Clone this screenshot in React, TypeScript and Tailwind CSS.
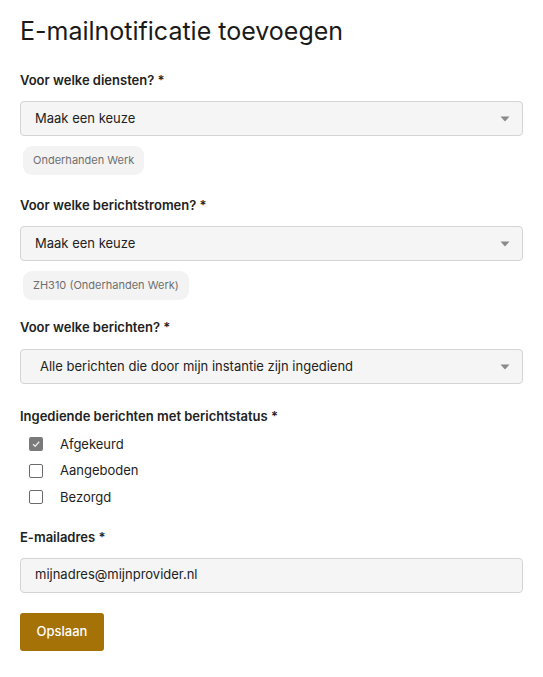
import React from "react";

function Caret() {
  return (
    <svg width="10" height="6" viewBox="0 0 10 6" className="shrink-0">
      <path d="M0.5 0.5 L9.5 0.5 L5 5.5 Z" fill="#8a8a8a" />
    </svg>
  );
}

function Select({ text, indent }: { text: string; indent?: boolean }) {
  return (
    <div className="flex h-[35px] w-full items-center justify-between rounded-[4px] border border-[#d4d4d4] bg-[#f5f5f5] pr-[12px]">
      <span className={`${indent ? "pl-[19px]" : "pl-[14px]"} text-[13px] text-[#222]`}>{text}</span>
      <Caret />
    </div>
  );
}

function Chip({ text }: { text: string }) {
  return (
    <div className="mt-[10px] ml-[3px] inline-flex h-[29px] items-center rounded-[9px] bg-[#f3f3f3] px-[10px] text-[11px] text-[#6f6f6f]">
      {text}
    </div>
  );
}

function Label({ text }: { text: string }) {
  return <div className="text-[13px] font-semibold text-[#222] leading-[16px]">{text}</div>;
}

function Check({ checked, label }: { checked?: boolean; label: string }) {
  return (
    <div className="flex h-[26.5px] items-center">
      <div
        className={`ml-[9px] flex h-[14px] w-[14px] items-center justify-center rounded-[2px] ${
          checked ? "bg-[#7a7a7a]" : "border border-[#6b6b6b] bg-white"
        }`}
      >
        {checked && (
          <svg width="10" height="10" viewBox="0 0 10 10">
            <path d="M2 5.2 L4.2 7.3 L8.2 2.8" stroke="#e8e8e8" strokeWidth="1.3" fill="none" />
          </svg>
        )}
      </div>
      <span className="ml-[17px] text-[13px] text-[#222]">{label}</span>
    </div>
  );
}

export default function App() {
  return (
    <div
      className="min-h-[677px] w-[543px] bg-white px-[20px] pt-[16px]"
      style={{ fontFamily: "Inter, 'Noto Sans', sans-serif" }}
    >
      <h1 className="text-[25px] font-normal leading-[30px] text-[#1a1a1a]">E-mailnotificatie toevoegen</h1>

      <div className="mt-[26px]">
        <Label text="Voor welke diensten? *" />
        <div className="mt-[13px]">
          <Select text="Maak een keuze" />
        </div>
        <Chip text="Onderhanden Werk" />
      </div>

      <div className="mt-[22px]">
        <Label text="Voor welke berichtstromen? *" />
        <div className="mt-[13px]">
          <Select text="Maak een keuze" />
        </div>
        <Chip text="ZH310 (Onderhanden Werk)" />
      </div>

      <div className="mt-[19px]">
        <Label text="Voor welke berichten? *" />
        <div className="mt-[14px]">
          <Select text="Alle berichten die door mijn instantie zijn ingediend" indent />
        </div>
      </div>

      <div className="mt-[24px]">
        <Label text="Ingediende berichten met berichtstatus *" />
        <div className="mt-[7px] flex flex-col">
          <Check checked label="Afgekeurd" />
          <Check label="Aangeboden" />
          <Check label="Bezorgd" />
        </div>
      </div>

      <div className="mt-[18px]">
        <Label text="E-mailadres *" />
        <div className="mt-[13px] flex h-[35px] w-full items-center rounded-[4px] border border-[#d4d4d4] bg-[#f5f5f5] pl-[14px] text-[13px] text-[#222]">
          mijnadres@mijnprovider.nl
        </div>
      </div>

      <button className="mt-[20px] h-[38px] w-[84px] rounded-[3px] bg-[#a57207] text-[13px] font-medium text-white">
        Opslaan
      </button>
    </div>
  );
}
